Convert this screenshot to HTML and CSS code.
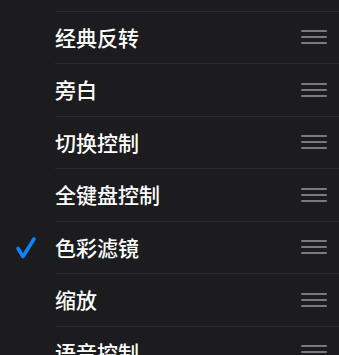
FILE: index.html
```html
<!DOCTYPE html>
<html lang="zh">
<head>
<meta charset="utf-8">
<link rel="stylesheet" href="styles.css">
</head>
<body>
<div class="list">
  <div class="row row-top"><div class="lead"></div><div class="body"></div></div>
  <div class="row"><div class="lead"></div><div class="body"><span class="label">经典反转</span><span class="grip"><i></i><i></i><i></i></span></div></div>
  <div class="row"><div class="lead"></div><div class="body"><span class="label">旁白</span><span class="grip"><i></i><i></i><i></i></span></div></div>
  <div class="row"><div class="lead"></div><div class="body"><span class="label">切换控制</span><span class="grip"><i></i><i></i><i></i></span></div></div>
  <div class="row"><div class="lead"></div><div class="body"><span class="label">全键盘控制</span><span class="grip"><i></i><i></i><i></i></span></div></div>
  <div class="row"><div class="lead"><svg class="check" width="22" height="24" viewBox="0 0 22 24"><path d="M3 12.5 L8 20.5 L19 3" fill="none" stroke="#0a84ff" stroke-width="3.6" stroke-linecap="round" stroke-linejoin="round"/></svg></div><div class="body"><span class="label">色彩滤镜</span><span class="grip"><i></i><i></i><i></i></span></div></div>
  <div class="row"><div class="lead"></div><div class="body"><span class="label">缩放</span><span class="grip"><i></i><i></i><i></i></span></div></div>
  <div class="row"><div class="lead"></div><div class="body"><span class="label">语音控制</span><span class="grip"><i></i><i></i><i></i></span></div></div>
</div>
</body>
</html>
```
FILE: styles.css
```css
html, body {
  margin: 0;
  padding: 0;
  background: #1c1c1e;
}
body {
  width: 339px;
  height: 355px;
  overflow: hidden;
  font-family: "Noto Sans CJK SC", "Noto Sans", sans-serif;
}
.list {
  display: flex;
  flex-direction: column;
}
.row {
  display: flex;
  height: 52.5px;
}
.row-top {
  height: 11.5px;
}
.lead {
  width: 55px;
  flex: none;
  display: flex;
  align-items: center;
  justify-content: flex-start;
}
.check {
  margin-left: 15px;
  margin-top: 1px;
}
.body {
  flex: 1;
  display: flex;
  align-items: center;
  justify-content: space-between;
  border-bottom: 1px solid #2a2a2d;
  padding-right: 12px;
}
.label {
  color: #ffffff;
  font-size: 21px;
  font-weight: 500;
  line-height: 1;
  letter-spacing: 0;
}
.grip {
  display: flex;
  flex-direction: column;
  gap: 4px;
  width: 26px;
}
.grip i {
  display: block;
  height: 2px;
  background: #7a7a7e;
  border-radius: 1px;
}
```
